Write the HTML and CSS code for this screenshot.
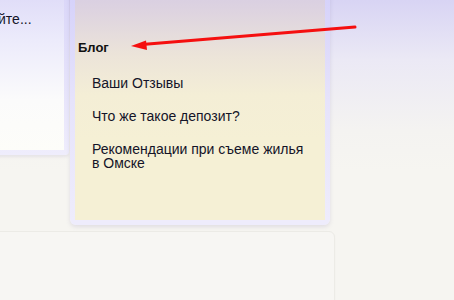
FILE: index.html
```html
<!DOCTYPE html>
<html lang="ru">
<head>
<meta charset="utf-8">
<link rel="stylesheet" href="styles.css">
</head>
<body>
<div class="page">
  <div class="top-row">
    <div class="card-left">
      <div class="card-left-inner">
        <p class="teaser">Узнайте...</p>
      </div>
    </div>
    <div class="card-mid">
      <div class="card-mid-inner">
        <h3 class="blog-title">Блог</h3>
        <ul class="blog-links">
          <li>Ваши Отзывы</li>
          <li>Что же такое депозит?</li>
          <li>Рекомендации при съеме жилья в Омске</li>
        </ul>
      </div>
    </div>
  </div>
  <div class="card-bottom"></div>
  <svg class="arrow" width="454" height="80" viewBox="0 0 454 80">
    <line x1="355" y1="27" x2="142" y2="44.5" stroke="#f50f0f" stroke-width="3" stroke-linecap="round"/>
    <polygon points="131,46 146,40.5 147,50" fill="#f50f0f"/>
  </svg>
</div>
</body>
</html>
```
FILE: styles.css
```css
html, body {
  margin: 0;
  padding: 0;
}
body {
  width: 454px;
  height: 300px;
  overflow: hidden;
  font-family: "Liberation Sans", Arial, sans-serif;
  color: #141428;
  background: linear-gradient(to bottom, #d8d4f4 0px, #ebe9f5 60px, #f4f3f1 130px, #f6f5f1 170px);
}
.page {
  position: relative;
  display: flow-root;
  width: 454px;
  height: 300px;
  overflow: hidden;
}
.top-row {
  display: flex;
  align-items: flex-start;
  gap: 1px;
  margin-top: -20px;
}
.card-left {
  margin-left: -60px;
  width: 124px;
  height: 170px;
  padding: 0 5px 5px 0;
  background: linear-gradient(to bottom, #d8d4f8, #efedfc);
  border-radius: 0 0 4px 0;
  box-shadow: 0 2px 3px rgba(120, 110, 160, 0.12);
  flex: none;
}
.card-left-inner {
  height: 100%;
  background: linear-gradient(to bottom, #dbd7f7 0px, #ecebfb 60px, #fbfbfb 120px, #fdfdf9 170px);
  overflow: hidden;
}
.teaser {
  margin: 0;
  padding: 31px 0 0 28px;
  font-size: 14px;
  line-height: 16px;
  white-space: nowrap;
}
.card-mid {
  width: 250px;
  height: 240px;
  padding: 0 5px 5px 5px;
  background: linear-gradient(to bottom, #d3cffa 0px, #e6e3fb 120px, #eeecfc 240px);
  border-radius: 0 0 6px 6px;
  box-shadow: 0 2px 4px rgba(120, 110, 160, 0.18);
  flex: none;
}
.card-mid-inner {
  height: 100%;
  box-sizing: border-box;
  padding: 59.7px 0 0 3px;
  background: linear-gradient(to bottom, #d4cae4 0px, #ddd3e0 30px, #ece4d9 75px, #f4eed6 115px, #f5f0d5 160px);
}
.blog-title {
  margin: 0;
  font-size: 13px;
  line-height: 16px;
  font-weight: bold;
  color: #111;
}
.blog-links {
  list-style: none;
  margin: 21.75px 0 0 0;
  padding: 0 0 0 14px;
  display: flex;
  flex-direction: column;
  gap: 19.6px;
}
.blog-links li {
  font-size: 14px;
  line-height: 13.4px;
  width: 220px;
}
.card-bottom {
  margin: 6px 0 0 -20px;
  width: 353px;
  height: 80px;
  background: #f7f6f3;
  border: 1px solid #ecebe6;
  border-radius: 6px;
  box-shadow: 0 1px 2px rgba(0, 0, 0, 0.03);
}
.arrow {
  position: absolute;
  left: 0;
  top: 0;
}
```
